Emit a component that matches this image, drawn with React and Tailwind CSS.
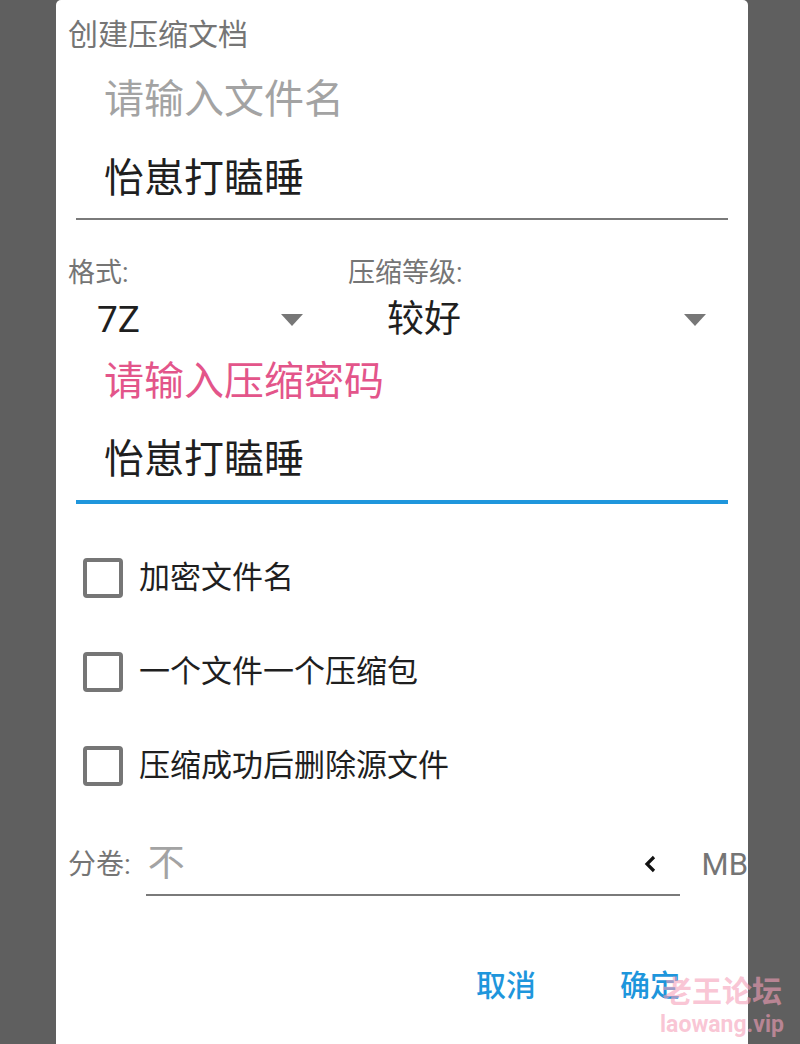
import { useState } from "react";

function Caret() {
  return (
    <svg width="22" height="12" viewBox="0 0 22 12" className="shrink-0">
      <path d="M0 0 L22 0 L11 12 Z" fill="#777777" />
    </svg>
  );
}

function CheckRow({ label, checked, onToggle }) {
  return (
    <div className="h-[94px] flex items-center pl-[27px] cursor-pointer" onClick={onToggle}>
      <div className="w-[40px] h-[40px] rounded-[4px] border-[4px] border-[#767676] shrink-0" />
      <span className="ml-[16px] text-[31px] text-[#1f1f1f]">{label}</span>
    </div>
  );
}

export default function App() {
  const [checks, setChecks] = useState([false, false, false]);

  const toggle = (i) => {
    const next = [...checks];
    next[i] = !next[i];
    setChecks(next);
  };

  const options = ["加密文件名", "一个文件一个压缩包", "压缩成功后删除源文件"];

  return (
    <div className="relative h-[1044px] bg-[#5f5f5f] overflow-hidden font-['Roboto','Noto_Sans_CJK_SC',sans-serif]">
      <div className="ml-[56px] w-[692px] h-full bg-white rounded-t-[5px] overflow-hidden">
        {/* title */}
        <div className="h-[68px] flex items-center pl-[12px] text-[30px] text-[#757575]">
          创建压缩文档
        </div>

        {/* file name */}
        <div className="h-[64px] leading-[64px] pl-[48px] text-[40px] text-[#a3a3a3]">请输入文件名</div>
        <div className="mt-[8px] h-[78px] leading-[78px] pl-[48px] text-[40px] text-[#1f1f1f]">怡崽打瞌睡</div>
        <div className="mx-[20px] h-[2px] bg-[#7a7a7a]" />

        {/* format / level */}
        <div className="mt-[36px] h-[34px] flex text-[27px] text-[#757575]">
          <div className="w-[292px] pl-[12px] leading-[34px]">格式:</div>
          <div className="leading-[34px]">压缩等级:</div>
        </div>
        <div className="h-[60px] flex items-center text-[37px] text-[#1f1f1f]">
          <div className="w-[292px] flex items-center pl-[41px] pr-[45px] justify-between">
            <span>7Z</span>
            <Caret />
          </div>
          <div className="flex-1 flex items-center pl-[39px] pr-[42px] justify-between">
            <span>较好</span>
            <Caret />
          </div>
        </div>

        {/* password */}
        <div className="h-[64px] leading-[64px] pl-[48px] text-[40px] text-[#e3558a]">请输入压缩密码</div>
        <div className="mt-[6px] h-[80px] leading-[80px] pl-[48px] text-[40px] text-[#1f1f1f]">怡崽打瞌睡</div>
        <div className="mx-[20px] h-[4px] bg-[#1f96dc]" />

        {/* options */}
        <div className="mt-[27px]">
          {options.map((label, i) => (
            <CheckRow key={label} label={label} checked={checks[i]} onToggle={() => toggle(i)} />
          ))}
        </div>

        {/* split volume */}
        <div className="mt-[21px] h-[62px] flex">
          <div className="w-[90px] pl-[12px] flex items-center text-[28px] text-[#757575]">分卷:</div>
          <div className="w-[535px] border-b-2 border-[#7a7a7a] flex items-center justify-between pl-[2px] pr-[23px]">
            <span className="text-[37px] text-[#a3a3a3]">不</span>
            <svg width="14" height="18" viewBox="0 0 14 18">
              <path d="M11 2 L4 9 L11 16" fill="none" stroke="#111111" strokeWidth="3.2" />
            </svg>
          </div>
          <div className="ml-[22px] flex items-center text-[31px] text-[#757575] whitespace-nowrap">MB</div>
        </div>

        {/* buttons */}
        <div className="mt-[59px] h-[60px] flex items-center justify-end pr-[68px] gap-[84px] text-[30px] font-medium text-[#1e96dc]">
          <button>取消</button>
          <button>确定</button>
        </div>
      </div>

      {/* watermark */}
      <div className="absolute left-[660px] top-[972px] flex flex-col items-center pointer-events-none text-[rgba(245,160,185,0.6)] font-bold">
        <span className="text-[30px] leading-[40px]">老王论坛</span>
        <span className="text-[23px] leading-[26px] font-['Roboto',sans-serif]">laowang.vip</span>
      </div>
    </div>
  );
}
